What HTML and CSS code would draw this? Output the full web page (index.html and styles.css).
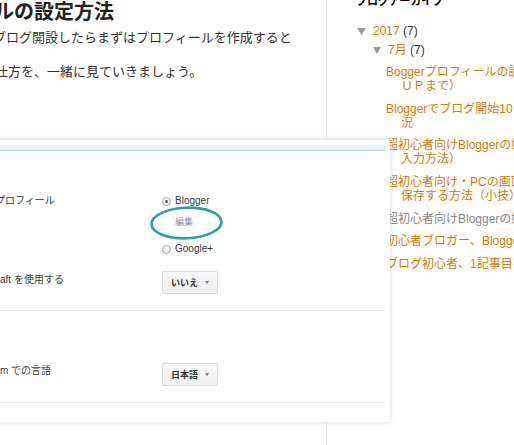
FILE: index.html
```html
<!DOCTYPE html>
<html lang="ja">
<head>
<meta charset="utf-8">
<title>プロフィールの設定方法</title>
<link rel="stylesheet" href="styles.css">
</head>
<body>
<div class="page">
  <main class="main">
    <h1 class="title">ルの設定方法</h1>
    <p class="lead">
      <span class="lead-line first">ブログ開設したらまずはプロフィールを作成すると</span>
      <span class="lead-line"></span>
      <span class="lead-line second">仕方を、一緒に見ていきましょう。</span>
    </p>
    <div class="shot">
      <div class="shot-band"></div>
      <div class="shot-section first">
        <div class="shot-row">
          <div class="shot-label l-profile">プロフィール</div>
          <div class="shot-controls">
            <div class="opt"><span class="radio on"></span><span>Blogger</span></div>
            <div class="edit">編集</div>
            <div class="opt opt2"><span class="radio"></span><span>Google+</span></div>
          </div>
        </div>
        <div class="shot-row row2">
          <div class="shot-label l-draft">aft を使用する</div>
          <div class="select"><span>いいえ</span><span class="caret"></span></div>
        </div>
      </div>
      <div class="shot-section second">
        <div class="shot-row">
          <div class="shot-label l-lang">m での言語</div>
          <div class="select"><span>日本語</span><span class="caret"></span></div>
        </div>
      </div>
      <svg class="circle" width="78" height="36" viewBox="0 0 78 36">
        <ellipse cx="38.5" cy="18" rx="35" ry="15.3" fill="none" stroke="#2c9fa7" stroke-width="2.6" transform="rotate(-2 38.5 18)"/>
      </svg>
    </div>
  </main>
  <aside class="side">
    <h2 class="side-title">ブログアーカイブ</h2>
    <div class="arch year">
      <svg class="tri" width="9" height="7" viewBox="0 0 9 7"><polygon points="0,0 9,0 4.5,7" fill="#9a9a9a"/></svg>
      <span><span class="arch-link">2017</span> <span class="count">(7)</span></span>
    </div>
    <div class="arch month">
      <svg class="tri" width="8" height="7" viewBox="0 0 8 7"><polygon points="0,0 8,0 4,7" fill="#9a9a9a"/></svg>
      <span><span class="arch-link">7月</span> <span class="count">(7)</span></span>
    </div>
    <ul class="posts">
      <li class="post"><span class="line">Boggerプロフィールの設</span><span class="line cont">ＵＰまで）</span></li>
      <li class="post"><span class="line">Bloggerでブログ開始10</span><span class="line cont">況</span></li>
      <li class="post"><span class="line">超初心者向けBloggerの始</span><span class="line cont">入力方法）</span></li>
      <li class="post"><span class="line">超初心者向け・PCの画面</span><span class="line cont">保存する方法（小技）</span></li>
      <li class="post visited"><span class="line">超初心者向けBloggerの始</span></li>
      <li class="post"><span class="line">初心者ブロガー、Blogger</span></li>
      <li class="post"><span class="line">ブログ初心者、1記事目を</span></li>
    </ul>
  </aside>
</div>
</body>
</html>
```
FILE: styles.css
```css
html, body {
  margin: 0;
  padding: 0;
  overflow: hidden;
  background: #fff;
}
body {
  width: 514px;
  height: 445px;
  font-family: "Liberation Sans", "Noto Sans CJK JP", sans-serif;
  color: #222;
}
.page {
  display: flex;
  height: 445px;
}
.main {
  flex: none;
  width: 326px;
  border-right: 1px solid #ececec;
}
.title {
  margin: 0 0 0 -6px;
  font-size: 20px;
  line-height: 24px;
  font-weight: bold;
  color: #222;
  white-space: nowrap;
}
.lead {
  margin: 5px 0 0;
  font-size: 13px;
  line-height: 17px;
  color: #333;
}
.lead-line {
  display: block;
  height: 17px;
  white-space: nowrap;
}
.lead-line.first { margin-left: -7px; }
.lead-line.second { margin-left: -5px; }

.shot {
  position: relative;
  box-sizing: border-box;
  width: 400px;
  margin: 59px 0 0 -10px;
  padding: 5px 5px 19px 0;
  background: #fff;
  border-top: 1px solid #e6e6e6;
  box-shadow: 0 0 5px rgba(0, 0, 0, 0.17);
  font-size: 10px;
  color: #3a3a3a;
}
.shot-band {
  height: 5px;
  background: #eef4fe;
  border-bottom: 1px solid #c6d6f1;
}
.shot-section {
  border-bottom: 1px solid #ebebeb;
}
.shot-section.first { padding: 43px 0 16px; }
.shot-section.second { padding: 52px 0 16px; }
.shot-row {
  display: grid;
  grid-template-columns: 172px auto;
  align-items: start;
}
.shot-row.row2 { margin-top: 15px; }
.shot-label {
  line-height: 14px;
  white-space: nowrap;
}
.l-profile { padding-left: 5px; }
.l-draft { padding-left: 10px; margin-top: 2px; }
.l-lang { padding-left: 10px; margin-top: 1px; }
.opt {
  display: flex;
  align-items: center;
  gap: 4px;
  line-height: 14px;
}
.opt2 { margin-top: 13px; }
.radio {
  position: relative;
  box-sizing: border-box;
  width: 9px;
  height: 9px;
  border-radius: 50%;
  border: 1px solid #a9a9a9;
  background: radial-gradient(circle at 50% 40%, #fff, #e6e6e6);
}
.radio.on::after {
  content: "";
  position: absolute;
  left: 2px;
  top: 2px;
  width: 3px;
  height: 3px;
  border-radius: 50%;
  background: #555;
}
.edit {
  margin-top: 7px;
  padding-left: 13px;
  line-height: 14px;
  font-size: 9px;
  color: #7b94b4;
}
.select {
  display: flex;
  align-items: center;
  box-sizing: border-box;
  width: 56px;
  height: 23px;
  padding-left: 8px;
  border: 1px solid #dadada;
  border-radius: 2px;
  background: linear-gradient(#f8f8f8, #f0f0f0);
  font-size: 9px;
  font-weight: bold;
  color: #333;
}
.caret {
  margin-left: auto;
  margin-right: 8px;
  width: 0;
  height: 0;
  border-left: 2.5px solid transparent;
  border-right: 2.5px solid transparent;
  border-top: 3px solid #777;
}
.circle {
  position: absolute;
  left: 158px;
  top: 65px;
}

.side {
  flex: 1;
  min-width: 0;
  padding-left: 29px;
  white-space: nowrap;
  font-size: 12px;
}
.side-title {
  margin: -6px 0 0;
  font-size: 11px;
  line-height: 14px;
  font-weight: bold;
  color: #000;
}
.arch {
  display: flex;
  align-items: center;
  gap: 7px;
  line-height: 14px;
}
.arch.year { margin-top: 16px; padding-left: 1px; }
.arch.month { margin-top: 5px; padding-left: 17px; }
.tri { display: block; }
.arch-link { color: #dd7700; }
.count { color: #333; }
.posts {
  margin: 8px 0 0;
  padding: 0 0 0 30px;
  list-style: none;
}
.post {
  margin-bottom: 8.7px;
  line-height: 14px;
  color: #dd7700;
}
.post.visited { color: #888; }
.line { display: block; }
.line.cont { padding-left: 15px; }
```
